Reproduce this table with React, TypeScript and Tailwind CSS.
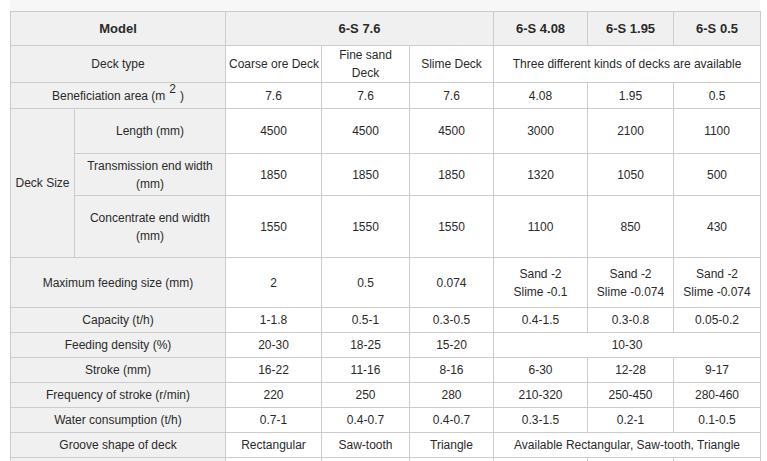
import React from "react";

const cell = "border border-[#cccccc] px-[3px] text-center align-middle";
const label = `${cell} bg-[#f0f0f0]`;
const head = `${cell} bg-[#f0f0f0] font-bold text-[13px]`;

type Row = { name: string; h: string; vals: (string | [string, number])[] };

const simpleRows: Row[] = [
  { name: "Capacity (t/h)", h: "h-[25px]", vals: ["1-1.8", "0.5-1", "0.3-0.5", "0.4-1.5", "0.3-0.8", "0.05-0.2"] },
  { name: "Feeding density (%)", h: "h-[25px]", vals: ["20-30", "18-25", "15-20", ["10-30", 3]] },
  { name: "Stroke (mm)", h: "h-[25px]", vals: ["16-22", "11-16", "8-16", "6-30", "12-28", "9-17"] },
  { name: "Frequency of stroke (r/min)", h: "h-[25px]", vals: ["220", "250", "280", "210-320", "250-450", "280-460"] },
  { name: "Water consumption (t/h)", h: "h-[25px]", vals: ["0.7-1", "0.4-0.7", "0.4-0.7", "0.3-1.5", "0.2-1", "0.1-0.5"] },
  {
    name: "Groove shape of deck",
    h: "h-[25px]",
    vals: ["Rectangular", "Saw-tooth", "Triangle", ["Available Rectangular, Saw-tooth, Triangle", 3]],
  },
];

export default function App() {
  return (
    <div className="bg-white min-h-screen pl-[10px] font-['Liberation_Sans',Arial,sans-serif] text-[12px] leading-[18px] text-[#2a2a2a]">
      <div className="w-[750px] h-[11px] bg-[#f7f7f7]" />
      <table className="w-[750px] table-fixed border-collapse">
        <colgroup>
          <col className="w-[64px]" />
          <col className="w-[151px]" />
          <col className="w-[96px]" />
          <col className="w-[88px]" />
          <col className="w-[84px]" />
          <col className="w-[94px]" />
          <col className="w-[86px]" />
          <col className="w-[87px]" />
        </colgroup>
        <tbody>
          <tr className="h-[34px]">
            <td colSpan={2} className={head}>Model</td>
            <td colSpan={3} className={head}>6-S 7.6</td>
            <td className={head}>6-S 4.08</td>
            <td className={head}>6-S 1.95</td>
            <td className={head}>6-S 0.5</td>
          </tr>
          <tr className="h-[37px]">
            <td colSpan={2} className={label}>Deck type</td>
            <td className={`${cell} whitespace-nowrap px-0`}>Coarse ore Deck</td>
            <td className={cell}>Fine sand<br />Deck</td>
            <td className={cell}>Slime Deck</td>
            <td colSpan={3} className={cell}>Three different kinds of decks are available</td>
          </tr>
          <tr className="h-[26px]">
            <td colSpan={2} className={label}>
              Beneficiation area (m
              <span className="relative -top-[7px] mx-[4px]">2</span>)
            </td>
            <td className={cell}>7.6</td>
            <td className={cell}>7.6</td>
            <td className={cell}>7.6</td>
            <td className={cell}>4.08</td>
            <td className={cell}>1.95</td>
            <td className={cell}>0.5</td>
          </tr>
          <tr className="h-[45px]">
            <td rowSpan={3} className={label}>Deck Size</td>
            <td className={label}>Length (mm)</td>
            <td className={cell}>4500</td>
            <td className={cell}>4500</td>
            <td className={cell}>4500</td>
            <td className={cell}>3000</td>
            <td className={cell}>2100</td>
            <td className={cell}>1100</td>
          </tr>
          <tr className="h-[42px]">
            <td className={label}>Transmission end width<br />(mm)</td>
            <td className={cell}>1850</td>
            <td className={cell}>1850</td>
            <td className={cell}>1850</td>
            <td className={cell}>1320</td>
            <td className={cell}>1050</td>
            <td className={cell}>500</td>
          </tr>
          <tr className="h-[62px]">
            <td className={label}>Concentrate end width<br />(mm)</td>
            <td className={cell}>1550</td>
            <td className={cell}>1550</td>
            <td className={cell}>1550</td>
            <td className={cell}>1100</td>
            <td className={cell}>850</td>
            <td className={cell}>430</td>
          </tr>
          <tr className="h-[50px]">
            <td colSpan={2} className={label}>Maximum feeding size (mm)</td>
            <td className={cell}>2</td>
            <td className={cell}>0.5</td>
            <td className={cell}>0.074</td>
            <td className={cell}>Sand -2<br />Slime -0.1</td>
            <td className={cell}>Sand -2<br />Slime -0.074</td>
            <td className={cell}>Sand -2<br />Slime -0.074</td>
          </tr>
          {simpleRows.map((r) => (
            <tr key={r.name} className={r.h}>
              <td colSpan={2} className={label}>{r.name}</td>
              {r.vals.map((v, i) =>
                Array.isArray(v) ? (
                  <td key={i} colSpan={v[1]} className={cell}>{v[0]}</td>
                ) : (
                  <td key={i} className={cell}>{v}</td>
                )
              )}
            </tr>
          ))}
          <tr className="h-[25px]">
            <td colSpan={2} className={label}></td>
            <td className={cell}></td>
            <td className={cell}></td>
            <td className={cell}></td>
            <td className={cell}></td>
            <td className={cell}></td>
            <td className={cell}></td>
          </tr>
        </tbody>
      </table>
    </div>
  );
}
